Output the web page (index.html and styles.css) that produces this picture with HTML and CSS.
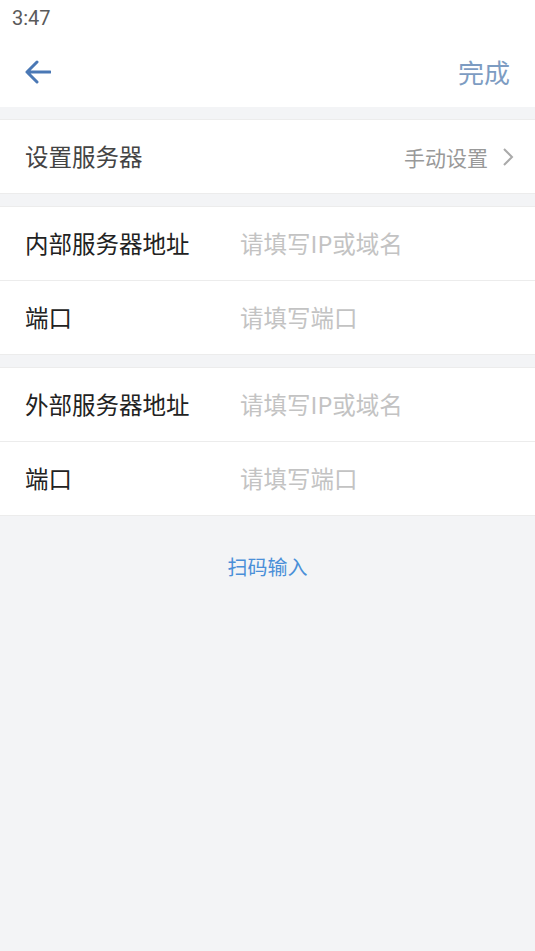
FILE: index.html
```html
<!DOCTYPE html>
<html lang="zh-CN">
<head>
<meta charset="utf-8">
<title>设置服务器</title>
<link rel="stylesheet" href="styles.css">
</head>
<body>
<div class="status">3:47</div>

<div class="header">
  <svg class="back" width="26" height="24" viewBox="0 0 26 24">
    <path d="M12 2 L2 12 L12 22 M2 12 L25 12" fill="none" stroke="#4a78b5" stroke-width="3" stroke-linecap="round" stroke-linejoin="round"/>
  </svg>
  <span class="done">完成</span>
</div>

<div class="group">
  <div class="row">
    <span class="label grey">设置服务器</span>
    <span class="mode">手动设置
      <svg class="chev" width="12" height="20" viewBox="0 0 12 20">
        <path d="M2 2 L10 10 L2 18" fill="none" stroke="#aaaaaa" stroke-width="2"/>
      </svg>
    </span>
  </div>
</div>

<div class="group">
  <div class="row">
    <span class="label">内部服务器地址</span>
    <span class="hint">请填写IP或域名</span>
  </div>
  <div class="row">
    <span class="label">端口</span>
    <span class="hint">请填写端口</span>
  </div>
</div>

<div class="group">
  <div class="row">
    <span class="label">外部服务器地址</span>
    <span class="hint">请填写IP或域名</span>
  </div>
  <div class="row">
    <span class="label">端口</span>
    <span class="hint">请填写端口</span>
  </div>
</div>

<div class="scan">扫码输入</div>
</body>
</html>
```

FILE: styles.css
```css
body { margin:0; background-color:#f3f4f6; font-family:"Noto Sans CJK SC", Roboto, sans-serif; height:951px; }
.status { background-color:#fff; height:36px; padding-left:12px; font-family:Roboto, sans-serif; font-size:20px; line-height:36px; color:#5a5a5a; }
.header { background-color:#fff; height:71px; display:flex; align-items:center; justify-content:space-between; padding:0 25px 0 25px; }
.done { font-size:26px; color:#7d9cc2; }
.group { background-color:#fff; margin-top:12px; border-top:1px solid #ececec; border-bottom:1px solid #ececec; }
.row { height:73px; display:flex; align-items:center; padding-left:25px; }
.row + .row { border-top:1px solid #ececec; }
.label { width:215px; font-size:23.5px; line-height:30px; padding-bottom:2px; color:#222; }
.label.grey { color:#444; flex:1; }
.hint { font-size:23.5px; line-height:30px; padding-bottom:2px; color:#c3c3c3; }
.mode { display:flex; align-items:center; font-size:21px; color:#999; padding-right:21px; }
.chev { margin-left:14px; }
.scan { text-align:center; margin-top:36px; font-size:20px; color:#4a8fd8; }
```
